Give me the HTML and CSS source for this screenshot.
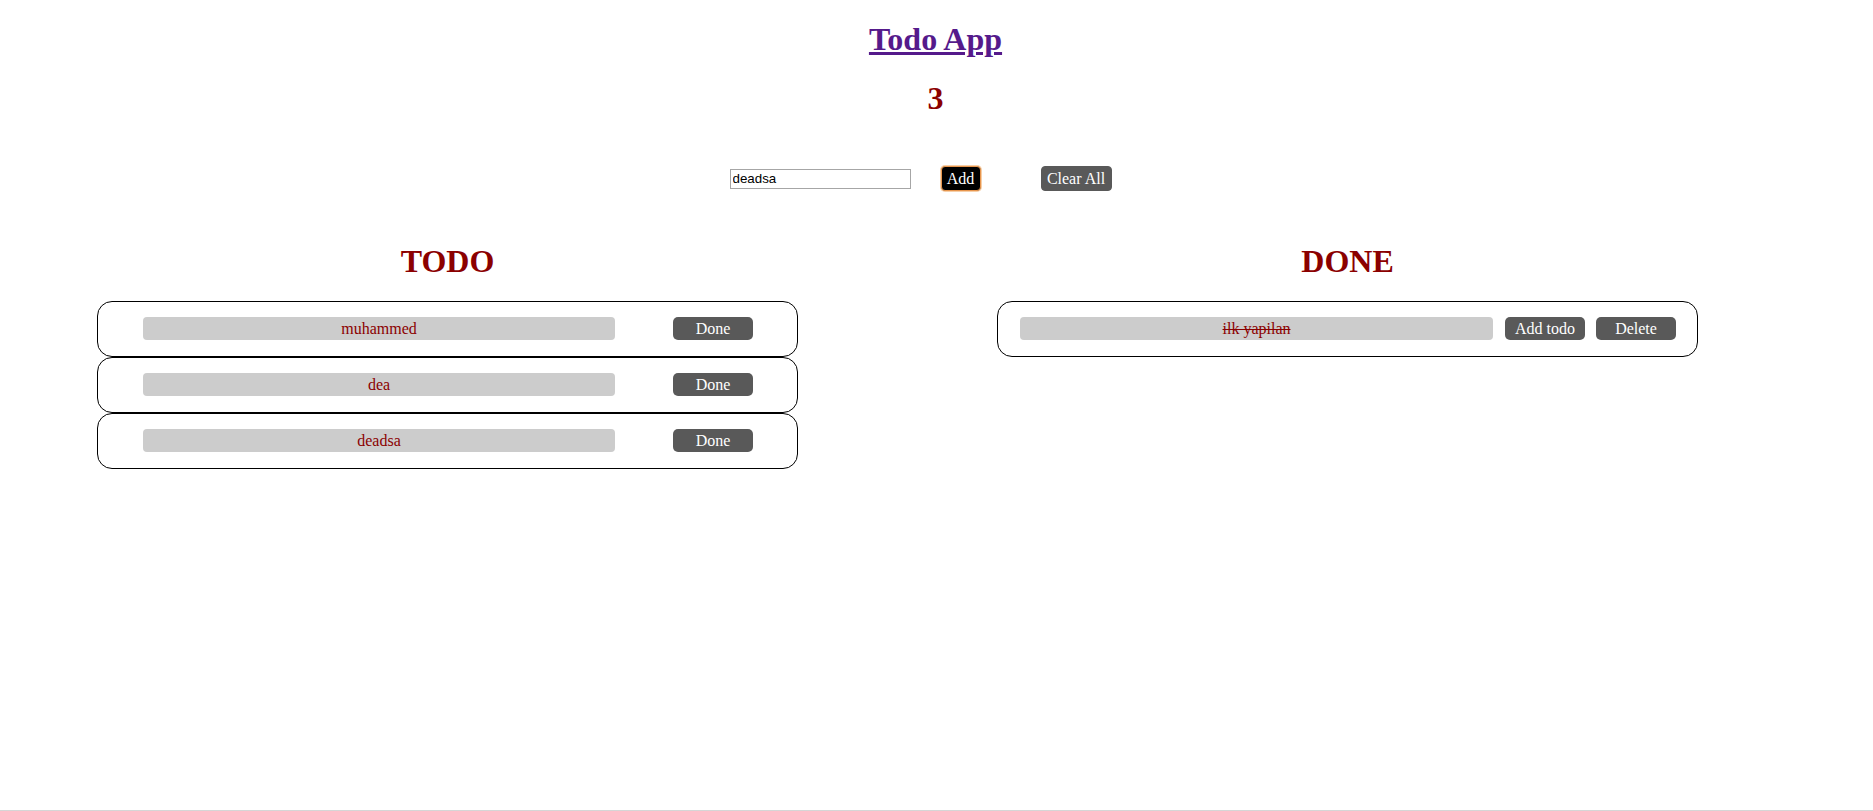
FILE: index.html
```html
<!DOCTYPE html>
<html lang="en">
<head>
<meta charset="utf-8">
<title>Todo App</title>
<link rel="stylesheet" href="styles.css">
</head>
<body>
<h1 class="title"><a href="#" class="title-link">Todo App</a></h1>
<h1 class="count">3</h1>
<div class="controls">
  <input class="todo-input" type="text" value="deadsa">
  <button class="btn-add">Add</button>
  <button class="btn-clear">Clear All</button>
</div>
<div class="columns">
  <section class="column">
    <h1 class="col-title">TODO</h1>
    <div class="card card-todo">
      <div class="bar">muhammed</div>
      <button class="btn">Done</button>
    </div>
    <div class="card card-todo">
      <div class="bar">dea</div>
      <button class="btn">Done</button>
    </div>
    <div class="card card-todo">
      <div class="bar">deadsa</div>
      <button class="btn">Done</button>
    </div>
  </section>
  <section class="column">
    <h1 class="col-title">DONE</h1>
    <div class="card card-done">
      <div class="bar bar-done">ilk yapilan</div>
      <button class="btn">Add todo</button>
      <button class="btn btn-delete">Delete</button>
    </div>
  </section>
</div>
<div class="bottom-line"></div>
</body>
</html>
```
FILE: styles.css
```css
html, body {
  background: #ffffff;
}
body {
  margin: 8px 10px 8px 8px;
  font-family: "Liberation Serif", "Times New Roman", serif;
}
h1 {
  font-size: 32px;
  margin: 21.44px 0;
  text-align: center;
  font-weight: bold;
}
.title {
  margin-top: 13.44px;
}
.title-link {
  color: #551a8b;
  text-decoration: underline;
}
.count {
  color: #8b0000;
}
.controls {
  display: flex;
  justify-content: center;
  align-items: center;
  margin: 49.5px 0 30px;
}
.todo-input {
  box-sizing: border-box;
  width: 181px;
  height: 20px;
  margin: 0;
  padding: 1px 2px;
  border: 1px solid #a6a6a6;
  border-radius: 0;
  font-family: "Liberation Sans", Arial, sans-serif;
  font-size: 13.33px;
  color: #000;
  background: #fff;
}
.btn-add,
.btn-clear {
  margin: 0 30px;
  font-family: "Liberation Serif", "Times New Roman", serif;
  font-size: 16px;
  line-height: 19px;
  color: #ffffff;
  box-sizing: border-box;
  height: 25px;
  padding: 2px 5px;
}
.btn-add {
  width: 40px;
  background: #000000;
  border: 1px solid #e8964e;
  box-shadow: 0 0 0 1px #f6cfa8;
  border-radius: 4px;
}
.btn-clear {
  width: 71px;
  background: #595959;
  border: 1px solid #595959;
  border-radius: 4px;
}
.columns {
  display: flex;
  gap: 199px;
  padding-left: 89px;
}
.column {
  width: 701px;
}
.col-title {
  color: #8b0000;
}
.card {
  box-sizing: border-box;
  width: 701px;
  display: flex;
  align-items: center;
  border: 1px solid #000000;
  border-radius: 15px;
}
.card-todo {
  padding: 15px 44px 16px 45px;
  gap: 58px;
}
.card-done {
  padding: 15px 21px 16px 22px;
  gap: 12px;
}
.bar {
  flex: 1;
  height: 23px;
  line-height: 23px;
  background: #cccccc;
  border-radius: 4px;
  text-align: center;
  color: #8b0000;
  font-size: 16px;
}
.bar-done {
  text-decoration: line-through;
}
.btn {
  box-sizing: border-box;
  width: 80px;
  height: 23px;
  padding: 0;
  border: none;
  border-radius: 5px;
  background: #595959;
  color: #ffffff;
  font-family: "Liberation Serif", "Times New Roman", serif;
  font-size: 16px;
  line-height: 23px;
}
.btn-delete {
  margin-left: -1px;
}
.bottom-line {
  position: fixed;
  left: 0;
  right: 0;
  bottom: 0;
  height: 1px;
  background: #d6d6d6;
}
```
